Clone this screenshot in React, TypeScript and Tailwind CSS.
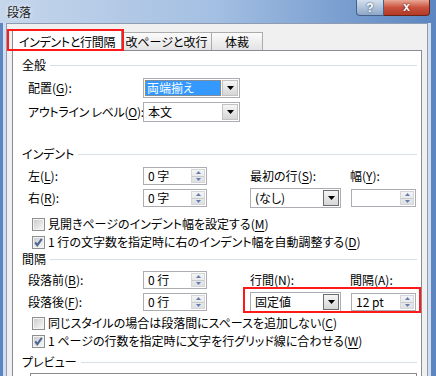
import React from 'react'

function U({ children }: { children: React.ReactNode }) {
    return <span className="underline underline-offset-[2px]">{children}</span>
}

function SectionHead({ title }: { title: string }) {
    return (
        <div className="flex h-[14px] items-center gap-[4px]">
            <span>{title}</span>
            <div className="h-px flex-1 bg-[#d5dfe5]" />
        </div>
    )
}

function DropButton({ dark }: { dark?: boolean }) {
    return (
        <div
            className={`flex w-[16px] items-center justify-center border bg-gradient-to-b from-[#f6f6f6] to-[#d6d6d6] ${
                dark ? 'border-[#6b6b6b]' : 'border-[#c2c2c2]'
            }`}
        >
            <svg width="7" height="4" viewBox="0 0 7 4">
                <path d="M0 0H7L3.5 4Z" fill="#000" />
            </svg>
        </div>
    )
}

function Combo({
    className,
    children,
    dark,
    selected,
}: {
    className: string
    children: React.ReactNode
    dark?: boolean
    selected?: boolean
}) {
    return (
        <div className={`flex h-[20px] border border-[#abadb3] bg-white p-px ${className}`}>
            {selected ? (
                <div className="mr-[1px] flex flex-1 items-center border border-dotted border-[#c9803a] bg-[#3399ff] pl-[1px] text-white">
                    {children}
                </div>
            ) : (
                <div className="flex flex-1 items-center pl-[3px]">{children}</div>
            )}
            <DropButton dark={dark} />
        </div>
    )
}

function Spin({ className, value }: { className: string; value?: string }) {
    return (
        <div className={`flex h-[18px] border border-[#abadb3] bg-white p-px ${className}`}>
            <div className="flex flex-1 items-center pl-[3px]">{value}</div>
            <div className="flex w-[14px] flex-col border border-[#d3d6db] bg-gradient-to-b from-[#f4f4f4] to-[#e0e0e0]">
                <div className="flex flex-1 items-center justify-center">
                    <svg width="5" height="3" viewBox="0 0 5 3">
                        <path d="M2.5 0L5 3H0Z" fill="#5f7fb2" />
                    </svg>
                </div>
                <div className="h-px bg-[#c6cbd2]" />
                <div className="flex flex-1 items-center justify-center">
                    <svg width="5" height="3" viewBox="0 0 5 3">
                        <path d="M0 0H5L2.5 3Z" fill="#5f7fb2" />
                    </svg>
                </div>
            </div>
        </div>
    )
}

function Check({ checked }: { checked?: boolean }) {
    return (
        <svg width="13" height="13" viewBox="0 0 13 13" className="shrink-0">
            <defs>
                <linearGradient id="cbfill" x1="0" y1="0" x2="1" y2="1">
                    <stop offset="0" stopColor="#cdcdcd" />
                    <stop offset="1" stopColor="#f6f6f6" />
                </linearGradient>
            </defs>
            <rect x="0.5" y="0.5" width="12" height="12" fill="#f4f4f4" stroke="#8e8f8f" />
            <rect x="2" y="2" width="9" height="9" fill="url(#cbfill)" />
            {checked && (
                <path d="M3.2 6.3L5.3 9.2L9.8 2.8" fill="none" stroke="#4c6592" strokeWidth="2" />
            )}
        </svg>
    )
}

function CheckRow({ checked, children }: { checked?: boolean; children: React.ReactNode }) {
    return (
        <div className="flex h-[16px] items-center gap-[3px] pl-[10px]">
            <Check checked={checked} />
            <span>{children}</span>
        </div>
    )
}

export default function App() {
    return (
        <div className="h-[376px] w-[436px] overflow-hidden bg-[#5b86c1] font-['Noto_Sans_CJK_JP',sans-serif] text-[12px] leading-[14px] text-black [font-feature-settings:'palt']">
            {/* title bar */}
            <div className="flex h-[23px] items-start justify-between bg-gradient-to-r from-[#c6d6eb] via-[#a3bfe2] to-[#5b86c1]">
                <div className="pl-[7px] pt-[5px] text-[#1a1a1a] [text-shadow:0_0_4px_#ffffff]">段落</div>
                <div className="mr-[6px] flex">
                    <div className="flex h-[16px] w-[28px] items-center justify-center rounded-bl-[4px] border border-t-0 border-[#44618a] bg-gradient-to-b from-[#d4e0ee] to-[#8ea7c8] font-['Liberation_Sans',sans-serif] text-[12px] font-bold leading-[14px] text-white [text-shadow:0_0_2px_#1e3558]">
                        ?
                    </div>
                    <div className="flex h-[16px] w-[46px] items-center justify-center rounded-br-[4px] border border-l-0 border-t-0 border-[#6b2318] bg-gradient-to-b from-[#e8a796] via-[#c9513d] to-[#b23a26] pb-[1px] font-['Liberation_Sans',sans-serif] text-[12px] font-bold leading-[12px] text-white [text-shadow:0_0_2px_#4a0f06]">
                        x
                    </div>
                </div>
            </div>

            {/* window body */}
            <div className="flex h-[353px] pl-[3px] pr-[5px]">
                <div className="flex-1 border-l-[3px] border-r-[3px] border-[#d2def0]">
                    <div className="h-full border border-b-0 border-[#8e9bb0] bg-[#f0f0f0] px-[5px] pt-[5px]">
                        {/* tabs */}
                        <div className="relative flex h-[21px] items-end">
                            <div className="relative z-10 -mb-px flex h-[22px] w-[110px] items-center justify-center border border-b-0 border-[#898c95] bg-white pt-[2px] tracking-[-0.3px]">
                                インデントと行間隔
                            </div>
                            <div className="flex h-[18px] w-[90px] items-center justify-center border border-b-0 border-l-0 border-[#acacac] bg-gradient-to-b from-[#fbfbfb] to-[#e3e3e3] pt-[1px]">
                                改ページと改行
                            </div>
                            <div className="flex h-[18px] w-[51px] items-center justify-center border border-b-0 border-l-0 border-[#acacac] bg-gradient-to-b from-[#fbfbfb] to-[#e3e3e3] pt-[1px]">
                                体裁
                            </div>
                            <div className="pointer-events-none absolute -left-[5px] top-0 z-20 h-[22px] w-[117px] border-2 border-[#ff1a1a]" />
                        </div>

                        {/* panel */}
                        <div className="h-[400px] border border-[#898c95] bg-white pl-[9px] pr-[4px]">
                            <div className="mt-[7px]">
                                <SectionHead title="全般" />
                            </div>
                            <div className="mt-[6px] flex h-[20px] items-center pl-[6px]">
                                <div className="w-[115px]">
                                    配置(<U>G</U>):
                                </div>
                                <Combo className="w-[97px]" selected>
                                    両端揃え
                                </Combo>
                            </div>
                            <div className="mt-[4px] flex h-[20px] items-center pl-[6px]">
                                <div className="w-[115px] whitespace-nowrap tracking-[-0.3px]">
                                    アウトライン レベル(<U>O</U>):
                                </div>
                                <Combo className="w-[97px]">本文</Combo>
                            </div>

                            <div className="mt-[25px]">
                                <SectionHead title="インデント" />
                            </div>
                            <div className="mt-[6px] flex h-[18px] items-center pl-[6px]">
                                <div className="w-[115px]">
                                    左(<U>L</U>):
                                </div>
                                <Spin className="w-[64px]" value="0 字" />
                                <div className="ml-[43px] w-[100px]">
                                    最初の行(<U>S</U>):
                                </div>
                                <div>
                                    幅(<U>Y</U>):
                                </div>
                            </div>
                            <div className="mt-[3px] flex h-[20px] items-center pl-[6px]">
                                <div className="w-[115px]">
                                    右(<U>R</U>):
                                </div>
                                <Spin className="w-[64px]" value="0 字" />
                                <Combo className="ml-[43px] w-[91px]" dark>
                                    (なし)
                                </Combo>
                                <Spin className="ml-[10px] w-[65px]" />
                            </div>

                            <div className="mt-[8px]">
                                <CheckRow>
                                    見開きページのインデント幅を設定する(<U>M</U>)
                                </CheckRow>
                            </div>
                            <div className="mt-[2px]">
                                <CheckRow checked>
                                    1 行の文字数を指定時に右のインデント幅を自動調整する(<U>D</U>)
                                </CheckRow>
                            </div>

                            <div className="mt-[2px]">
                                <SectionHead title="間隔" />
                            </div>
                            <div className="mt-[5px] flex h-[18px] items-center pl-[6px]">
                                <div className="w-[115px]">
                                    段落前(<U>B</U>):
                                </div>
                                <Spin className="w-[64px]" value="0 行" />
                                <div className="ml-[43px] w-[100px]">
                                    行間(<U>N</U>):
                                </div>
                                <div>
                                    間隔(<U>A</U>):
                                </div>
                            </div>
                            <div className="mt-[3px] flex h-[20px] items-center pl-[6px]">
                                <div className="w-[115px]">
                                    段落後(<U>F</U>):
                                </div>
                                <Spin className="w-[64px]" value="0 行" />
                                <div className="relative ml-[43px] flex items-center">
                                    <Combo className="w-[91px]" dark>
                                        固定値
                                    </Combo>
                                    <Spin className="ml-[10px] w-[65px]" value="12 pt" />
                                    <div className="pointer-events-none absolute -bottom-[1px] -left-[7px] -right-[5px] -top-[5px] border-2 border-[#ff1a1a]" />
                                </div>
                            </div>

                            <div className="mt-[3px]">
                                <CheckRow>
                                    同じスタイルの場合は段落間にスペースを追加しない(<U>C</U>)
                                </CheckRow>
                            </div>
                            <div className="mt-[2px]">
                                <CheckRow checked>
                                    1 ページの行数を指定時に文字を行グリッド線に合わせる(<U>W</U>)
                                </CheckRow>
                            </div>

                            <div className="mt-[6px]">
                                <SectionHead title="プレビュー" />
                            </div>
                            <div className="ml-[8px] mt-[4px] h-[40px] border border-[#8a8a8a] bg-white" />
                        </div>
                    </div>
                </div>
            </div>
        </div>
    )
}
